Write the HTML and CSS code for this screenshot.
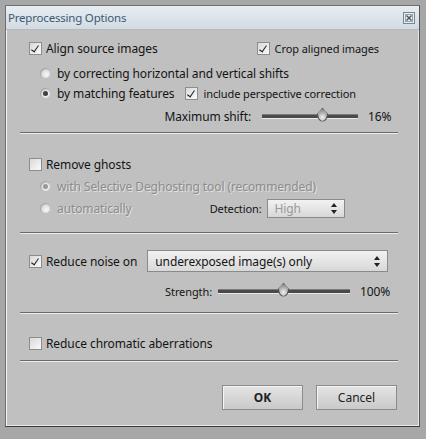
FILE: index.html
```html
<!DOCTYPE html>
<html>
<head>
<meta charset="utf-8">
<link rel="stylesheet" href="styles.css">
</head>
<body>
<div class="dialog">
  <div class="titlebar">
    <span class="title">Preprocessing Options</span>
    <span class="close"><svg width="12" height="12" viewBox="0 0 12 12"><rect x="0.5" y="0.5" width="11" height="11" fill="#e8ecef" stroke="#7a8590"/><rect x="2.5" y="2.5" width="7" height="7" fill="none" stroke="#9aa3ab"/><path d="M3.5 3.5 L8.5 8.5 M8.5 3.5 L3.5 8.5" stroke="#4a5560" stroke-width="1.4"/></svg></span>
  </div>
  <div class="content">
    <div class="row r-align">
      <label class="opt"><span class="cb checked"></span>Align source images</label>
      <label class="opt crop small"><span class="cb checked"></span>Crop aligned images</label>
    </div>
    <div class="row sub r-rad1">
      <label class="opt"><span class="rad"></span>by correcting horizontal and vertical shifts</label>
    </div>
    <div class="row sub r-rad2">
      <label class="opt"><span class="rad on"></span>by matching features</label>
      <label class="opt small persp"><span class="cb checked"></span>include perspective correction</label>
    </div>
    <div class="row r-shift">
      <span class="slabel">Maximum shift:</span>
      <div class="slider s1"><span class="thumb" style="left: 55px"></span></div>
      <span class="val">16%</span>
    </div>
    <div class="sep s-1"></div>
    <div class="row r-ghost">
      <label class="opt"><span class="cb"></span>Remove ghosts</label>
    </div>
    <div class="row sub r-sel">
      <label class="opt dis"><span class="rad on dis"></span>with Selective Deghosting tool (recommended)</label>
    </div>
    <div class="row sub r-auto">
      <label class="opt dis"><span class="rad dis"></span>automatically</label>
      <span class="det small">Detection:</span>
      <div class="select dsel"><span>High</span><span class="arrows"></span></div>
    </div>
    <div class="sep s-2"></div>
    <div class="row r-noise">
      <label class="opt"><span class="cb checked"></span>Reduce noise on</label>
      <div class="select nsel"><span>underexposed image(s) only</span><span class="arrows"></span></div>
    </div>
    <div class="row r-str">
      <span class="slabel small">Strength:</span>
      <div class="slider s2"><span class="thumb" style="left: 60px"></span></div>
      <span class="val">100%</span>
    </div>
    <div class="sep s-3"></div>
    <div class="row r-chrom">
      <label class="opt"><span class="cb"></span>Reduce chromatic aberrations</label>
    </div>
    <div class="sep s-4"></div>
    <div class="buttons">
      <button class="btn ok">OK</button>
      <button class="btn">Cancel</button>
    </div>
  </div>
</div>
</body>
</html>
```

FILE: styles.css
```css
html, body {
  margin: 0;
  padding: 0;
}
body {
  width: 426px;
  height: 439px;
  background: #a7a7a7;
  font-family: "Noto Sans", "DejaVu Sans", sans-serif;
  font-size: 12px;
  letter-spacing: -0.1px;
  color: #141414;
  overflow: hidden;
}
.dialog {
  margin: 5px 5px 0 5px;
  width: 415px;
  height: 422px;
  border: 1px solid #6f6f6f;
  border-right-color: #555;
  border-bottom-color: #3a3a3a;
  background: #c0c0c0;
  box-shadow: inset 1px 0 0 #f4f4f4, inset -1px -1px 0 #e8e8e8;
  box-sizing: border-box;
  display: flex;
  flex-direction: column;
}
.titlebar {
  height: 23px;
  background: linear-gradient(#e6edf3, #d3dbe2);
  display: flex;
  align-items: center;
  justify-content: space-between;
  padding: 0 4px 0 2px;
  border-bottom: 1px solid #b3b9be;
}
.title {
  color: #3c5874;
  font-size: 11.5px;
  letter-spacing: -0.2px;
}
.close {
  display: flex;
}
.content {
  padding: 8px 0 0 23px;
  display: flex;
  flex-direction: column;
}
.row {
  display: flex;
  align-items: center;
  height: 20px;
}
.sub {
  padding-left: 11px;
}
.opt {
  display: flex;
  align-items: center;
  white-space: nowrap;
}
.small {
  font-size: 11px;
}
.cb {
  width: 11px;
  height: 11px;
  border: 1px solid #8d8d8d;
  background: linear-gradient(135deg, #d9d9d9, #fafafa);
  margin-right: 4px;
  position: relative;
  flex: none;
}
.cb.checked::after {
  content: "";
  position: absolute;
  left: 3px;
  top: 1px;
  width: 3px;
  height: 7px;
  border: solid #222;
  border-width: 0 1.5px 1.5px 0;
  transform: rotate(35deg);
}
.small .cb {
  margin-right: 5px;
}
.rad {
  width: 11px;
  height: 11px;
  border-radius: 50%;
  background: radial-gradient(circle at 60% 60%, #f8f8f8, #d0d0d0 70%);
  box-shadow: inset 1px 1px 0 #a8a8a8, inset 0 0 0 1px #bcbcbc;
  margin-right: 6px;
  position: relative;
  flex: none;
}
.rad.on::after {
  content: "";
  position: absolute;
  left: 3px;
  top: 3px;
  width: 5px;
  height: 5px;
  border-radius: 50%;
  background: #404040;
}
.rad.dis.on::after {
  background: #999;
}
.dis {
  color: #8c8c8c;
  text-shadow: 1px 1px 0 #e2e2e2;
}
.crop {
  margin-left: 99px;
}
.r-rad1 {
  margin-top: 5px;
}
.persp {
  margin-left: 11px;
}
.r-shift {
  margin-top: 3px;
}
.slabel {
  width: 222px;
  text-align: right;
  flex: none;
}
.slabel.small {
  width: 183px;
}
.slider {
  position: relative;
  height: 3px;
  background: #4a4a4a;
  border-top: 1px solid #7a7a7a;
  border-bottom: 1px solid #e8e8e8;
  margin-left: 11px;
  flex: none;
}
.s1 {
  width: 96px;
}
.s2 {
  width: 132px;
  margin-left: 6px;
}
.thumb {
  position: absolute;
  top: -7px;
  width: 11px;
  height: 14px;
  background: radial-gradient(circle at 50% 70%, #f0f0f0, #8a8a8a 80%);
  border-radius: 50% 50% 50% 50% / 40% 40% 60% 60%;
  border: 1px solid #555;
  box-sizing: border-box;
  clip-path: polygon(50% 0, 100% 45%, 100% 100%, 0 100%, 0 45%);
}
.val {
  margin-left: 10px;
}
.sep {
  margin-left: -9px;
  width: 378px;
  height: 1px;
  background: #6a6a6a;
  border-bottom: 1px solid #ededed;
}
.s-1 { margin-top: 6px; }
.r-ghost { margin-top: 20px; }
.r-sel { margin-top: 2px; }
.r-auto { margin-top: 2px; }
.det {
  margin-left: 78px;
}
.select {
  display: flex;
  align-items: center;
  justify-content: space-between;
  box-sizing: border-box;
  border: 1px solid #8a8a8a;
  background: linear-gradient(#f2f2f2, #d8d8d8);
  padding: 0 6px 0 7px;
}
.dsel {
  width: 78px;
  height: 19px;
  margin-left: 5px;
  color: #9a9a9a;
}
.arrows {
  width: 7px;
  height: 11px;
  position: relative;
}
.arrows::before, .arrows::after {
  content: "";
  position: absolute;
  left: 0;
  border-left: 3.5px solid transparent;
  border-right: 3.5px solid transparent;
}
.arrows::before {
  top: 0;
  border-bottom: 4px solid #222;
}
.arrows::after {
  bottom: 0;
  border-top: 4px solid #222;
}
.s-2 { margin-top: 14px; }
.r-noise {
  margin-top: 16px;
  height: 22px;
}
.nsel {
  width: 241px;
  height: 22px;
  margin-left: 10px;
  font-size: 12px;
}
.r-str {
  margin-top: 9px;
}
.s-3 { margin-top: 11px; }
.r-chrom { margin-top: 19px; }
.s-4 { margin-top: 7px; }
.buttons {
  display: flex;
  justify-content: flex-end;
  gap: 13px;
  margin-top: 23px;
  padding-right: 22px;
}
.btn {
  width: 81px;
  height: 25px;
  font-family: "Noto Sans", "DejaVu Sans", sans-serif;
  font-size: 12px;
  color: #222;
  background: linear-gradient(#e4e4e4, #c9c9c9);
  border: 1px solid #8c8c8c;
  box-shadow: inset 1px 1px 0 #f5f5f5;
  padding: 0;
}
.ok {
  font-weight: bold;
}
```
